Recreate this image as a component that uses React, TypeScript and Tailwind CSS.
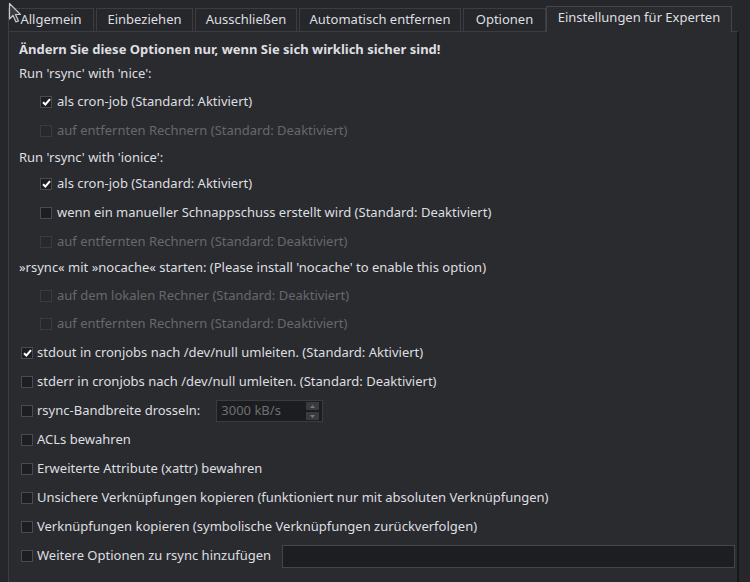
import React from "react";

type Row =
  | { kind: "label"; text: string; mt: string }
  | { kind: "check"; text: string; mt: string; checked?: boolean; disabled?: boolean; indent?: boolean; extra?: "spin" | "field" };

const tabs = [
  { label: "Allgemein", w: "w-[86px]" },
  { label: "Einbeziehen", w: "w-[97px]" },
  { label: "Ausschließen", w: "w-[102px]" },
  { label: "Automatisch entfernen", w: "w-[162px]" },
  { label: "Optionen", w: "w-[83px]" },
];

const rows: Row[] = [
  { kind: "label", text: "Run 'rsync' with 'nice':", mt: "mt-0" },
  { kind: "check", text: "als cron-job (Standard: Aktiviert)", mt: "mt-[4px]", checked: true, indent: true },
  { kind: "check", text: "auf entfernten Rechnern (Standard: Deaktiviert)", mt: "mt-[5px]", disabled: true, indent: true },
  { kind: "label", text: "Run 'rsync' with 'ionice':", mt: "mt-[3px]" },
  { kind: "check", text: "als cron-job (Standard: Aktiviert)", mt: "mt-[2px]", checked: true, indent: true },
  { kind: "check", text: "wenn ein manueller Schnappschuss erstellt wird (Standard: Deaktiviert)", mt: "mt-[5px]", indent: true },
  { kind: "check", text: "auf entfernten Rechnern (Standard: Deaktiviert)", mt: "mt-[5px]", disabled: true, indent: true },
  { kind: "label", text: "»rsync« mit »nocache« starten: (Please install 'nocache' to enable this option)", mt: "mt-[2px]" },
  { kind: "check", text: "auf dem lokalen Rechner (Standard: Deaktiviert)", mt: "mt-[4px]", disabled: true, indent: true },
  { kind: "check", text: "auf entfernten Rechnern (Standard: Deaktiviert)", mt: "mt-[4px]", disabled: true, indent: true },
  { kind: "check", text: "stdout in cronjobs nach /dev/null umleiten. (Standard: Aktiviert)", mt: "mt-[5px]", checked: true },
  { kind: "check", text: "stderr in cronjobs nach /dev/null umleiten. (Standard: Deaktiviert)", mt: "mt-[5px]" },
  { kind: "check", text: "rsync-Bandbreite drosseln:", mt: "mt-[5px]", extra: "spin" },
  { kind: "check", text: "ACLs bewahren", mt: "mt-[5px]" },
  { kind: "check", text: "Erweiterte Attribute (xattr) bewahren", mt: "mt-[5px]" },
  { kind: "check", text: "Unsichere Verknüpfungen kopieren (funktioniert nur mit absoluten Verknüpfungen)", mt: "mt-[5px]" },
  { kind: "check", text: "Verknüpfungen kopieren (symbolische Verknüpfungen zurückverfolgen)", mt: "mt-[5px]" },
  { kind: "check", text: "Weitere Optionen zu rsync hinzufügen", mt: "mt-[5px]", extra: "field" },
];

function Box({ checked, disabled }: { checked?: boolean; disabled?: boolean }) {
  return (
    <span
      className={
        "flex h-[12px] w-[12px] shrink-0 items-center justify-center border " +
        (disabled ? "border-[#3a3b3f] bg-[#28292d]" : "border-[#4a4b50] bg-[#1d1e21]")
      }
    >
      {checked && (
        <svg width="9" height="8" viewBox="0 0 9 8">
          <path d="M1 4.2 L3.4 6.5 L8 1.2" fill="none" stroke="#ffffff" strokeWidth="2" />
        </svg>
      )}
    </span>
  );
}

function SpinBox() {
  return (
    <div className="ml-[16px] flex h-[22px] w-[107px] items-center border border-[#3b3c40] bg-[#1c1d20] pl-[4px] pr-[3px]">
      <span className="flex-1 text-[#6e6f73]">3000 kB/s</span>
      <div className="flex flex-col gap-[2px]">
        <span className="flex h-[8px] w-[13px] items-center justify-center bg-[#3a3b3f]">
          <svg width="5" height="3" viewBox="0 0 5 3">
            <path d="M0 3 L2.5 0 L5 3 Z" fill="#77787c" />
          </svg>
        </span>
        <span className="flex h-[8px] w-[13px] items-center justify-center bg-[#3a3b3f]">
          <svg width="5" height="3" viewBox="0 0 5 3">
            <path d="M0 0 L2.5 3 L5 0 Z" fill="#77787c" />
          </svg>
        </span>
      </div>
    </div>
  );
}

export default function App() {
  return (
    <div className="relative h-[582px] w-[750px] overflow-hidden bg-[#26272b] font-['Noto_Sans',sans-serif] text-[13px] text-[#dedfe0]">
      {/* tab bar */}
      <div className="flex h-[31px] items-end gap-[2px] pl-[8px]">
        {tabs.map((t) => (
          <div
            key={t.label}
            className={`${t.w} flex h-[23px] items-center justify-center border border-b-0 border-[#3c3d42] bg-[#26272b] pb-[1px]`}
          >
            {t.label}
          </div>
        ))}
        <div className="relative top-[1px] -ml-[2px] flex h-[26px] w-[186px] items-center justify-center border border-b-0 border-[#45464b] bg-[#2a2b2f] pb-[3px]">
          Einstellungen für Experten
        </div>
      </div>

      {/* pane */}
      <div className="ml-[8px] h-[600px] w-[731px] border border-r-2 border-[#3c3d42] border-r-[#17181a] bg-[#2a2b2f] pl-[10px] pt-[6px]">
        <div className="flex h-[24px] items-center font-bold">
          Ändern Sie diese Optionen nur, wenn Sie sich wirklich sicher sind!
        </div>
        {rows.map((r, i) =>
          r.kind === "label" ? (
            <div key={i} className={`flex h-[24px] items-center ${r.mt}`}>
              {r.text}
            </div>
          ) : (
            <div
              key={i}
              className={`flex h-[24px] items-center ${r.mt} ${r.indent ? "pl-[21px]" : "pl-[2px]"}`}
            >
              <Box checked={r.checked} disabled={r.disabled} />
              <span className={`${r.indent ? "ml-[5px]" : "ml-[4px]"} ${r.disabled ? "text-[#67686c]" : ""}`}>
                {r.text}
              </span>
              {r.extra === "spin" && <SpinBox />}
              {r.extra === "field" && (
                <div className="ml-[11px] h-[23px] w-[453px] border border-[#45464b] bg-[#1d1e21]" />
              )}
            </div>
          )
        )}
      </div>

      {/* mouse cursor */}
      <svg className="absolute left-[8px] top-[2px]" width="16" height="22" viewBox="0 0 16 22">
        <path d="M1.5 1.5 L1.5 17 L5 13.5 L8 20 L10.5 19 L7.5 12.5 L12.5 12.5 Z" fill="#3a3b3f" stroke="#c8c8c8" strokeWidth="1.2" strokeLinejoin="round" />
      </svg>
    </div>
  );
}
